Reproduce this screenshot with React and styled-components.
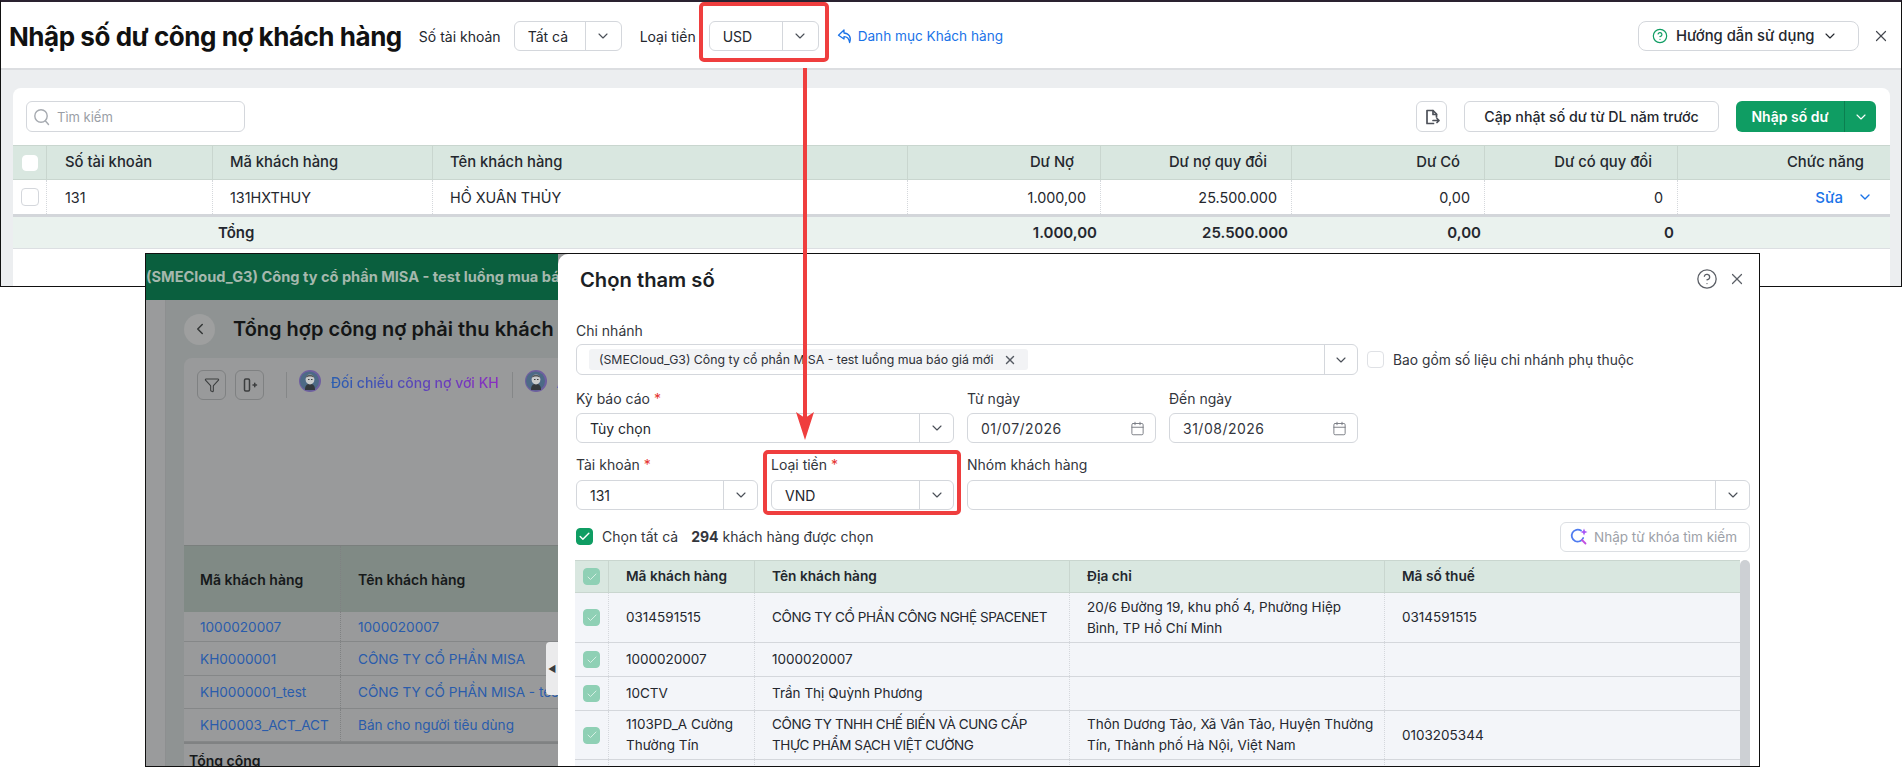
import React from "react"
import styled, { createGlobalStyle } from "styled-components"
import { ChevronDown, ChevronLeft, CircleHelp, X, Check, Funnel, Calendar } from "lucide-react"

const GlobalStyle = createGlobalStyle`
  html, body {
    margin: 0;
    background: #fff;
    font-family: Inter, "Noto Sans", "Liberation Sans", sans-serif;
    color: #1f2229;
  }
  * { box-sizing: border-box; }
`

const Page = styled.div`
  position: relative;
  width: 1903px;
  height: 778px;
  overflow: hidden;
  background: #fff;
`

/* first screenshot */
const TopShot = styled.section`
  width: 1902px;
  height: 287px;
  border-top: 2px solid #2a2230;
  border-left: 1px solid #111;
  border-right: 1px solid #111;
  border-bottom: 1px solid #111;
  display: flex;
  flex-direction: column;
  overflow: hidden;
`

const TopBar = styled.header`
  height: 68px;
  flex: none;
  display: flex;
  align-items: center;
  padding: 2px 11px 0 8px;
  background: #fff;
  border-bottom: 2px solid #dcdee1;
`

const Title = styled.h1`
  margin: 0 17px 0 0;
  font-size: 26px;
  font-weight: 700;
  letter-spacing: -0.46px;
  color: #111;
  white-space: nowrap;
`

const BarLabel = styled.span`
  font-size: 14px;
  color: #24272e;
  margin-right: 13px;
  white-space: nowrap;
`

const SelectBox = styled.div`
  width: ${(p) => p.$w}px;
  height: ${(p) => p.$h || 30}px;
  flex: none;
  display: flex;
  align-items: stretch;
  border: 1px solid #d4d7dc;
  border-radius: 6px;
  background: #fff;
  font-size: 14px;
  color: #24272e;
  margin-right: ${(p) => p.$mr || 0}px;
`

const SelectValue = styled.div`
  flex: 1;
  min-width: 0;
  display: flex;
  align-items: center;
  padding-left: ${(p) => p.$pad ?? 13}px;
`

const SelectArrow = styled.div`
  width: ${(p) => p.$w || 36}px;
  flex: none;
  display: flex;
  align-items: center;
  justify-content: center;
  border-left: 1px solid #d4d7dc;
  color: #4a4f57;
`

const BackLink = styled.a`
  display: flex;
  align-items: center;
  gap: 5px;
  margin-left: 18px;
  font-size: 13.6px;
  color: #1a73e8;
`

const Push = styled.div`
  flex: 1;
`

const GuideButton = styled.button`
  width: 221px;
  height: 30px;
  flex: none;
  display: flex;
  align-items: center;
  padding: 0 0 0 13px;
  gap: 8px;
  font: inherit;
  font-size: 14.8px;
  font-weight: 500;
  color: #24272e;
  background: #fff;
  border: 1px solid #d4d7dc;
  border-radius: 8px;
  white-space: nowrap;
`

const CloseIcon = styled(X)`
  flex: none;
  margin-left: 13px;
  color: #44484f;
`

const GrayArea = styled.div`
  flex: 1;
  min-height: 0;
  padding: 18px 11px 0 12px;
  background: #eceef0;
`

const Card = styled.div`
  height: 100%;
  background: #fff;
  border-radius: 8px 8px 0 0;
  display: flex;
  flex-direction: column;
`

const CardTools = styled.div`
  height: 57px;
  flex: none;
  display: flex;
  align-items: flex-start;
  padding: 13px 14px 0 13px;
  gap: 17px;
`

const SearchBox = styled.div`
  width: 219px;
  height: 31px;
  display: flex;
  align-items: center;
  gap: 6px;
  padding-left: 6px;
  border: 1px solid #d4d7dc;
  border-radius: 6px;
  font-size: 13px;
  color: #9a9ea6;
`

const IconBtn = styled.button`
  width: 31px;
  height: 31px;
  padding: 0;
  display: flex;
  align-items: center;
  justify-content: center;
  background: #fff;
  color: #4d5159;
  border: 1px solid #d4d7dc;
  border-radius: 6px;
`

const PlainBtn = styled.button`
  width: 255px;
  height: 31px;
  font: inherit;
  font-size: 14.2px;
  font-weight: 500;
  color: #24272e;
  background: #fff;
  border: 1px solid #d4d7dc;
  border-radius: 6px;
  white-space: nowrap;
  padding: 0;
`

const SplitBtn = styled.div`
  width: 140px;
  height: 31px;
  display: flex;
  border-radius: 6px;
  background: #0f9d63;
  color: #fff;
  font-size: 14px;
  font-weight: 600;
`

const SplitMain = styled.div`
  flex: 1;
  display: flex;
  align-items: center;
  justify-content: center;
`

const SplitArrow = styled.div`
  width: 32px;
  display: flex;
  align-items: center;
  justify-content: center;
  border-left: 1px solid #0b7f50;
`

const topCols = "34px 166px 220px 475px 193px 191px 193px 193px 212px"

const TRow = styled.div`
  display: grid;
  grid-template-columns: ${(p) => p.$cols};
  height: ${(p) => p.$h}px;
  flex: none;
  background: ${(p) => p.$bg || "transparent"};
  border-top: ${(p) => p.$top || "none"};
  border-bottom: ${(p) => p.$bottom || "none"};
`

const TCell = styled.div`
  display: flex;
  align-items: center;
  min-width: 0;
  justify-content: ${(p) => (p.$right ? "flex-end" : "flex-start")};
  padding: ${(p) => p.$pad || "0 17px"};
  font-size: ${(p) => p.$fs || 14.4}px;
  font-weight: ${(p) => p.$fw || 400};
  color: ${(p) => p.$color || "#24272e"};
  line-height: ${(p) => p.$lh || "21px"};
  letter-spacing: ${(p) => p.$ls || "normal"};
  border-right: ${(p) => p.$line || "none"};
`

const Box = styled.span`
  width: ${(p) => p.$s || 16}px;
  height: ${(p) => p.$s || 16}px;
  flex: none;
  display: flex;
  align-items: center;
  justify-content: center;
  border-radius: 4px;
  background: ${(p) => p.$bg || "#fff"};
  border: 1px solid ${(p) => p.$bd || "#d4d7dc"};
  color: #fff;
`

const EditText = styled.span`
  color: #1a73e8;
  font-size: 15px;
  font-weight: 500;
  margin-right: 14px;
`

/* second screenshot */
const SecondShot = styled.section`
  position: absolute;
  left: 145px;
  top: 253px;
  width: 1615px;
  height: 514px;
  border: 1px solid #111;
  display: flex;
  overflow: hidden;
  background: #98999a;
`

const DimPane = styled.div`
  width: 412px;
  flex: none;
  display: flex;
  flex-direction: column;
  position: relative;
  overflow: hidden;
`

const DimTop = styled.div`
  height: 46px;
  flex: none;
  display: flex;
  align-items: center;
  background: #0a5f3e;
  color: #a5b8ad;
  font-size: 14.6px;
  font-weight: 700;
  white-space: nowrap;
  overflow: hidden;
`

const DimBody = styled.div`
  flex: 1;
  min-height: 0;
  display: flex;
`

const DimRail = styled.div`
  width: 20px;
  flex: none;
  background: #9a9b9c;
  border-right: 1px solid #8d8f90;
`

const DimGutter = styled.div`
  width: 18px;
  flex: none;
  background: #8f9393;
`

const DimMain = styled.div`
  flex: 1;
  min-width: 0;
  display: flex;
  flex-direction: column;
  background: #8f9393;
`

const DimHead = styled.div`
  height: 58px;
  flex: none;
  display: flex;
  align-items: center;
  gap: 18px;
  font-size: 20px;
  font-weight: 600;
  color: #141616;
  white-space: nowrap;
  overflow: hidden;
`

const BackCircle = styled.span`
  width: 31px;
  height: 31px;
  flex: none;
  border-radius: 50%;
  background: #9e9f9f;
  color: #343737;
  display: flex;
  align-items: center;
  justify-content: center;
`

const DimCard = styled.div`
  flex: 1;
  min-height: 0;
  background: #999a9b;
  border-radius: 8px 0 0 0;
  display: flex;
  flex-direction: column;
`

const DimTools = styled.div`
  height: 187px;
  flex: none;
  display: flex;
  align-items: flex-start;
  padding: 12px 0 0 13px;
  white-space: nowrap;
  overflow: hidden;
`

const DimBtn = styled.span`
  width: 29px;
  height: 30px;
  flex: none;
  margin-right: 9px;
  display: flex;
  align-items: center;
  justify-content: center;
  border: 1px solid #7f8182;
  border-radius: 6px;
  color: #3c3e3f;
`

const DimSep = styled.span`
  width: 1px;
  height: 26px;
  flex: none;
  margin: 2px 12px 0 13px;
  background: #858788;
`

const AvatarSvg = styled.svg`
  flex: none;
  margin-right: 10px;
`

const AiLink = styled.span`
  font-size: 14px;
  font-weight: 500;
  line-height: 26px;
  background: linear-gradient(90deg, #2a5fb0, #8a2fc0);
  -webkit-background-clip: text;
  background-clip: text;
  color: transparent;
`

const BlueLink = styled.span`
  font-size: 14px;
  font-weight: 500;
  line-height: 26px;
  color: #2a5fb0;
`

const DimHeadRow = styled.div`
  height: 67px;
  flex: none;
  display: flex;
  background: #808a85;
  border-top: 1px solid #7a7f7d;
  font-size: 14px;
  font-weight: 600;
  color: #16191a;
`

const DimRow = styled.div`
  height: ${(p) => p.$h || 33}px;
  flex: none;
  display: flex;
  border-bottom: 1px solid #858788;
  font-size: 13.6px;
  color: #2a5cab;
`

const DimCol = styled.div`
  width: ${(p) => (p.$first ? 157 : 220)}px;
  flex: none;
  display: flex;
  align-items: center;
  padding-left: ${(p) => (p.$first ? 16 : 17)}px;
  white-space: nowrap;
  overflow: hidden;
  border-right: ${(p) => (p.$first ? "1px dotted #7f8182" : "none")};
`

const DimTotal = styled.div`
  flex: 1;
  padding: 8px 0 0 5px;
  font-size: 14px;
  font-weight: 600;
  color: #16191a;
  border-top: 2px solid #808283;
`

const CollapseTab = styled.span`
  position: absolute;
  right: 0;
  top: 388px;
  width: 12px;
  height: 53px;
  display: flex;
  align-items: center;
  justify-content: center;
  background: #ebebec;
  border-radius: 4px 0 0 4px;
  color: #3a3c3e;
  font-size: 9px;
`

const Modal = styled.div`
  flex: 1;
  min-width: 0;
  padding: 0 8px 0 18px;
  background: #fff;
  border-radius: 10px 0 0 0;
  display: flex;
  flex-direction: column;
`

const ModalHead = styled.div`
  height: 50px;
  flex: none;
  display: flex;
  align-items: center;
  gap: 10px;
  padding: 0 5px 0 4px;
  color: #5b5f66;
`

const ModalTitle = styled.h2`
  margin: 0;
  flex: 1;
  font-size: 20.2px;
  font-weight: 600;
  color: #1c1f25;
`

const FormGrid = styled.div`
  display: grid;
  grid-template-columns: 182px 183px 189px 189px 1fr;
  column-gap: 13px;
`

const Field = styled.div`
  grid-column: span ${(p) => p.$span || 1};
  display: flex;
  flex-direction: column;
  height: ${(p) => p.$h}px;
  min-width: 0;
`

const FieldLabel = styled.label`
  height: ${(p) => p.$h}px;
  flex: none;
  display: flex;
  align-items: flex-start;
  gap: 4px;
  padding-top: ${(p) => p.$top}px;
  font-size: 14px;
  line-height: 18px;
  color: #33363d;
`

const Star = styled.span`
  color: #e5342f;
`

const SubBranch = styled.div`
  display: flex;
  align-items: center;
  gap: 9px;
  height: 31px;
  margin: 40px 0 0 -4px;
`

const BranchTag = styled.span`
  height: 21px;
  display: flex;
  align-items: center;
  gap: 10px;
  margin-left: 12px;
  padding: 0 11px 0 10px;
  background: #f2f3f5;
  border-radius: 3px;
  font-size: 12.3px;
  color: #2e3138;
  white-space: nowrap;
`

const SideLabel = styled.span`
  font-size: 13.8px;
  color: #33363d;
  white-space: nowrap;
`

const DateBox = styled.div`
  height: 30px;
  display: flex;
  align-items: center;
  justify-content: space-between;
  padding: 0 10px 0 13px;
  border: 1px solid #d4d7dc;
  border-radius: 6px;
  font-size: 14px;
  letter-spacing: 0.5px;
  color: #33363d;
`

const CheckRow = styled.div`
  height: 50px;
  flex: none;
  display: flex;
  align-items: center;
  padding: 3px 1px 0 0;
  font-size: 14px;
  color: #33363d;
`

const AllLabel = styled.span`
  margin-left: 9px;
`

const Count = styled.span`
  margin-left: 13px;
  font-size: 14px;

  b {
    font-weight: 700;
  }
`

const KeywordBox = styled.div`
  width: 190px;
  height: 30px;
  margin-left: auto;
  display: flex;
  align-items: center;
  gap: 5px;
  padding-left: 9px;
  border: 1px solid #dcdfe3;
  border-radius: 6px;
  font-size: 13.5px;
  color: #9da1a8;
  white-space: nowrap;
`

const TableWrap = styled.div`
  flex: 1;
  min-height: 0;
  display: flex;
  margin: 0 1px 0 -1px;
  overflow: hidden;
`

const TableBody = styled.div`
  flex: 1;
  min-width: 0;
  display: flex;
  flex-direction: column;
`

const ScrollBar = styled.div`
  width: 10px;
  flex: none;
  background: #cdd0d4;
  border-radius: 5px 5px 0 0;
`

const Highlight = styled.div`
  position: absolute;
  left: ${(p) => p.$x}px;
  top: ${(p) => p.$y}px;
  width: ${(p) => p.$w}px;
  height: ${(p) => p.$h}px;
  border: 4px solid #ef3e3e;
  border-radius: 5px;
`

const ArrowSvg = styled.svg`
  position: absolute;
  left: 790px;
  top: 66px;
`

const modalCols = "34px 146px 315px 315px 1fr"

const topHead = [
  ["Số tài khoản", "0 0 0 18px"],
  ["Mã khách hàng"],
  ["Tên khách hàng"],
  ["Dư Nợ", "0 26px 0 0"],
  ["Dư nợ quy đổi", "0 24px 0 0"],
  ["Dư Có", "0 24px 0 0"],
  ["Dư có quy đổi", "0 25px 0 0"],
  ["Chức năng", "0 26px 0 0"],
]

const topValues = ["1.000,00", "25.500.000", "0,00", "0"]

const dimRows = [
  ["1000020007", "1000020007", 30],
  ["KH0000001", "CÔNG TY CỔ PHẦN MISA", 34],
  ["KH0000001_test", "CÔNG TY CỔ PHẦN MISA - test", 33],
  ["KH00003_ACT_ACT", "Bán cho người tiêu dùng", 33],
]

const customers = [
  {
    h: 50,
    code: "0314591515",
    name: "CÔNG TY CỔ PHẦN CÔNG NGHỆ SPACENET",
    addr: "20/6 Đường 19, khu phố 4, Phường Hiệp Bình, TP Hồ Chí Minh",
    tax: "0314591515",
  },
  { h: 34, code: "1000020007", name: "1000020007", addr: "", tax: "" },
  { h: 34, code: "10CTV", name: "Trần Thị Quỳnh Phương", addr: "", tax: "" },
  {
    h: 49,
    code: "1103PD_A Cường Thường Tín",
    name: "CÔNG TY TNHH CHẾ BIẾN VÀ CUNG CẤP THỰC PHẨM SẠCH VIỆT CƯỜNG",
    addr: "Thôn Dương Tảo, Xã Vân Tảo, Huyện Thường Tín, Thành phố Hà Nội, Việt Nam",
    tax: "0103205344",
  },
  { h: 12, code: "", name: "", addr: "", tax: "" },
]

const dotted = "1px dotted #d5d8dc"
const solid = "1px solid #c9d6cf"

function Chevron({ size = 16 }) {
  return <ChevronDown size={size} strokeWidth={1.7} />
}

function Select({ value, w, h, mr, arrow }) {
  return (
    <SelectBox $w={w} $h={h} $mr={mr}>
      <SelectValue>{value}</SelectValue>
      <SelectArrow $w={arrow}>
        <Chevron />
      </SelectArrow>
    </SelectBox>
  )
}

function ReplyIcon() {
  return (
    <svg width="16" height="17" viewBox="0 0 16 17" fill="none" stroke="currentColor" strokeWidth="1.3" strokeLinejoin="round">
      <path d="M7 2 L1.5 7.2 L7 11 V8.6 C10 8.6 12 10.5 12.6 14.5 C14.6 9.5 12 5.2 7 5 Z" />
    </svg>
  )
}

function ExportIcon() {
  return (
    <svg width="18" height="18" viewBox="0 0 18 18" fill="none" stroke="currentColor" strokeWidth="1.7" strokeLinecap="round" strokeLinejoin="round">
      <path d="M10.5 15.5H4V2.5h6l3.5 3.5v3" />
      <path d="M10 2.5V6.5h3.5" />
      <path d="M10 12.5h6M14 10.5l2 2-2 2" />
    </svg>
  )
}

function ColumnsIcon() {
  return (
    <svg width="18" height="18" viewBox="0 0 18 18" fill="none" stroke="currentColor" strokeWidth="1.5" strokeLinecap="round">
      <rect x="3.5" y="3" width="5" height="12" rx="1.2" />
      <path d="M12 9h3.5M13.75 7.3v3.4" />
    </svg>
  )
}

function Avatar() {
  return (
    <AvatarSvg width="22" height="22" viewBox="0 0 22 22">
      <circle cx="11" cy="11" r="11" fill="#6f5fa0" />
      <circle cx="10.5" cy="11" r="9.5" fill="#4d6a86" />
      <path d="M6 20 C6 15 8 14 11 14 C14 14 16 15 16 20 Z" fill="#33383c" />
      <ellipse cx="11" cy="9.5" rx="4.4" ry="5" fill="#c9cbcc" />
      <path d="M6.5 8 C7 3.5 15 3.5 15.5 8 C13 6 9 6 6.5 8 Z" fill="#56595b" />
      <path d="M9 9.5h1.5M12 9.5h1.5" stroke="#3c3f41" strokeWidth="1" />
    </AvatarSvg>
  )
}

function SearchOval() {
  return (
    <svg width="18" height="20" viewBox="0 0 18 20" fill="none" stroke="#a6aab0" strokeWidth="1.4" strokeLinecap="round">
      <circle cx="8" cy="9" r="6.2" />
      <path d="M12.5 14l3 3.5" />
    </svg>
  )
}

function SparkSearch() {
  return (
    <svg width="19" height="19" viewBox="0 0 19 19" fill="none" strokeLinecap="round">
      <path d="M11 3.6 A6 6 0 1 0 13.2 11" stroke="#4f7cf0" strokeWidth="1.8" />
      <path d="M12 13l3.5 3.5" stroke="#c24fe0" strokeWidth="1.8" />
      <path d="M14 1.5l1 2.5 2.5 1-2.5 1-1 2.5-1-2.5-2.5-1 2.5-1z" fill="#a855f7" />
    </svg>
  )
}

function RowCheck() {
  return (
    <Box $s={17} $bg="#8fd0b5" $bd="#8fd0b5">
      <Check size={12} strokeWidth={2} color="#d6efe4" />
    </Box>
  )
}

export default function App() {
  return (
    <Page>
      <GlobalStyle />
      <TopShot>
        <TopBar>
          <Title>Nhập số dư công nợ khách hàng</Title>
          <BarLabel>Số tài khoản</BarLabel>
          <Select value="Tất cả" w={108} mr={18} />
          <BarLabel>Loại tiền</BarLabel>
          <Select value="USD" w={110} />
          <BackLink>
            <ReplyIcon />
            Danh mục Khách hàng
          </BackLink>
          <Push />
          <GuideButton>
            <CircleHelp size={16} strokeWidth={1.8} color="#0f9d63" />
            Hướng dẫn sử dụng
            <Chevron />
          </GuideButton>
          <CloseIcon size={18} strokeWidth={1.6} />
        </TopBar>
        <GrayArea>
          <Card>
            <CardTools>
              <SearchBox>
                <SearchOval />
                Tìm kiếm
              </SearchBox>
              <Push />
              <IconBtn>
                <ExportIcon />
              </IconBtn>
              <PlainBtn>Cập nhật số dư từ DL năm trước</PlainBtn>
              <SplitBtn>
                <SplitMain>Nhập số dư</SplitMain>
                <SplitArrow>
                  <Chevron />
                </SplitArrow>
              </SplitBtn>
            </CardTools>
            <TRow $cols={topCols} $h={35} $bg="#d9e7e0" $top={solid} $bottom={solid}>
              <TCell $pad="0 0 0 9px" $line={solid}>
                <Box $bd="#fff" />
              </TCell>
              {topHead.map(([text, pad], i) => (
                <TCell key={text} $fs={14.8} $fw={500} $right={i > 2} $pad={pad} $line={i < 7 ? solid : "none"}>
                  {text}
                </TCell>
              ))}
            </TRow>
            <TRow $cols={topCols} $h={34}>
              <TCell $pad="0 0 0 8px" $line={dotted}>
                <Box $s={18} />
              </TCell>
              <TCell $pad="0 0 0 18px" $line={dotted}>131</TCell>
              <TCell $line={dotted}>131HXTHUY</TCell>
              <TCell $line={dotted}>HỒ XUÂN THỦY</TCell>
              {topValues.map((v) => (
                <TCell key={v} $right $pad="0 14px 0 0" $line={dotted}>
                  {v}
                </TCell>
              ))}
              <TCell $right $pad="0 17px 0 0">
                <EditText>Sửa</EditText>
                <ChevronDown size={16} strokeWidth={2} color="#1a73e8" />
              </TCell>
            </TRow>
            <TRow $cols={topCols} $h={35} $bg="#eaf2ee" $top="3px solid #d3d6da" $bottom="1px solid #dcdfe2">
              <TCell />
              <TCell />
              <TCell $pad="0 0 0 5px" $fs={15} $fw={600}>
                Tổng
              </TCell>
              <TCell />
              {topValues.map((v) => (
                <TCell key={v} $right $pad="0 4px 0 0" $fs={15} $fw={600}>
                  {v}
                </TCell>
              ))}
              <TCell />
            </TRow>
          </Card>
        </GrayArea>
      </TopShot>

      <SecondShot>
        <DimPane>
          <DimTop>(SMECloud_G3) Công ty cổ phần MISA - test luồng mua báo giá mới</DimTop>
          <DimBody>
            <DimRail />
            <DimGutter />
            <DimMain>
              <DimHead>
                <BackCircle>
                  <ChevronLeft size={18} strokeWidth={2} />
                </BackCircle>
                Tổng hợp công nợ phải thu khách hàng
              </DimHead>
              <DimCard>
                <DimTools>
                  <DimBtn>
                    <Funnel size={16} strokeWidth={1.6} />
                  </DimBtn>
                  <DimBtn>
                    <ColumnsIcon />
                  </DimBtn>
                  <DimSep />
                  <Avatar />
                  <AiLink>Đối chiếu công nợ với KH</AiLink>
                  <DimSep />
                  <Avatar />
                  <BlueLink>AI phân tích</BlueLink>
                </DimTools>
                <DimHeadRow>
                  <DimCol $first>Mã khách hàng</DimCol>
                  <DimCol>Tên khách hàng</DimCol>
                </DimHeadRow>
                {dimRows.map(([code, name, h]) => (
                  <DimRow key={code} $h={h}>
                    <DimCol $first>{code}</DimCol>
                    <DimCol>{name}</DimCol>
                  </DimRow>
                ))}
                <DimTotal>Tổng cộng</DimTotal>
              </DimCard>
            </DimMain>
          </DimBody>
          <CollapseTab>◀</CollapseTab>
        </DimPane>

        <Modal>
          <ModalHead>
            <ModalTitle>Chọn tham số</ModalTitle>
            <CircleHelp size={22} strokeWidth={1.4} />
            <X size={18} strokeWidth={1.6} />
          </ModalHead>
          <FormGrid>
            <Field $span={4} $h={71}>
              <FieldLabel $h={40} $top={18}>Chi nhánh</FieldLabel>
              <SelectBox $w={782} $h={31}>
                <SelectValue $pad={0}>
                  <BranchTag>
                    (SMECloud_G3) Công ty cổ phần MISA - test luồng mua báo giá mới
                    <X size={14} strokeWidth={2.4} color="#555a62" />
                  </BranchTag>
                </SelectValue>
                <SelectArrow $w={33}>
                  <Chevron />
                </SelectArrow>
              </SelectBox>
            </Field>
            <Field $h={71}>
              <SubBranch>
                <Box $s={17} $bd="#dfe1e5" />
                <SideLabel>Bao gồm số liệu chi nhánh phụ thuộc</SideLabel>
              </SubBranch>
            </Field>

            <Field $span={2} $h={68}>
              <FieldLabel $h={38} $top={15}>
                Kỳ báo cáo <Star>*</Star>
              </FieldLabel>
              <Select value="Tùy chọn" w={378} arrow={34} />
            </Field>
            <Field $h={68}>
              <FieldLabel $h={38} $top={15}>Từ ngày</FieldLabel>
              <DateBox>
                01/07/2026
                <Calendar size={15} strokeWidth={1.5} color="#777b82" />
              </DateBox>
            </Field>
            <Field $h={68}>
              <FieldLabel $h={38} $top={15}>Đến ngày</FieldLabel>
              <DateBox>
                31/08/2026
                <Calendar size={15} strokeWidth={1.5} color="#777b82" />
              </DateBox>
            </Field>
            <Field $h={68} />

            <Field $h={67}>
              <FieldLabel $h={37} $top={13}>
                Tài khoản <Star>*</Star>
              </FieldLabel>
              <Select value="131" w={182} arrow={34} />
            </Field>
            <Field $h={67}>
              <FieldLabel $h={37} $top={13}>
                Loại tiền <Star>*</Star>
              </FieldLabel>
              <Select value="VND" w={183} arrow={34} />
            </Field>
            <Field $span={3} $h={67}>
              <FieldLabel $h={37} $top={13}>Nhóm khách hàng</FieldLabel>
              <Select value="" w={783} arrow={34} />
            </Field>
          </FormGrid>

          <CheckRow>
            <Box $s={17} $bg="#0f9d63" $bd="#0f9d63">
              <Check size={13} strokeWidth={2.6} />
            </Box>
            <AllLabel>Chọn tất cả</AllLabel>
            <Count>
              <b>294</b> khách hàng được chọn
            </Count>
            <KeywordBox>
              <SparkSearch />
              Nhập từ khóa tìm kiếm
            </KeywordBox>
          </CheckRow>

          <TableWrap>
            <TableBody>
              <TRow $cols={modalCols} $h={33} $bg="#d9e7e0" $top={solid} $bottom={solid}>
                <TCell $pad="0 0 0 8px" $line={solid}>
                  <RowCheck />
                </TCell>
                <TCell $fs={13.7} $fw={600} $line={solid}>Mã khách hàng</TCell>
                <TCell $fs={13.7} $fw={600} $line={solid}>Tên khách hàng</TCell>
                <TCell $fs={13.7} $fw={600} $line={solid}>Địa chỉ</TCell>
                <TCell $fs={13.7} $fw={600}>Mã số thuế</TCell>
              </TRow>
              {customers.map((c, i) => (
                <TRow key={i} $cols={modalCols} $h={c.h} $bg="#f3f5f9" $bottom="1px solid #d4d7dc">
                  <TCell $pad="0 0 0 8px" $line="1px dotted #d4d7dc">
                    {c.code && <RowCheck />}
                  </TCell>
                  <TCell $fs={13.5} $pad="0 8px 0 17px" $line="1px dotted #d4d7dc">{c.code}</TCell>
                  <TCell $fs={13.5} $pad="0 8px 0 17px" $ls={i === 1 || i === 2 ? "normal" : "-0.4px"} $line="1px dotted #d4d7dc">
                    {c.name}
                  </TCell>
                  <TCell $fs={13.5} $pad="0 9px 0 17px" $line="1px dotted #d4d7dc">{c.addr}</TCell>
                  <TCell $fs={13.5}>{c.tax}</TCell>
                </TRow>
              ))}
            </TableBody>
            <ScrollBar />
          </TableWrap>
        </Modal>
      </SecondShot>

      <Highlight $x={699} $y={2} $w={130} $h={60} />
      <Highlight $x={763} $y={450} $w={198} $h={65} />
      <ArrowSvg width="30" height="376" viewBox="0 0 30 376">
        <rect x="13" y="2" width="4" height="358" fill="#ef3e3e" />
        <path d="M6 346 L15 352 L24 346 L15 374 Z" fill="#ef3e3e" />
      </ArrowSvg>
    </Page>
  )
}
